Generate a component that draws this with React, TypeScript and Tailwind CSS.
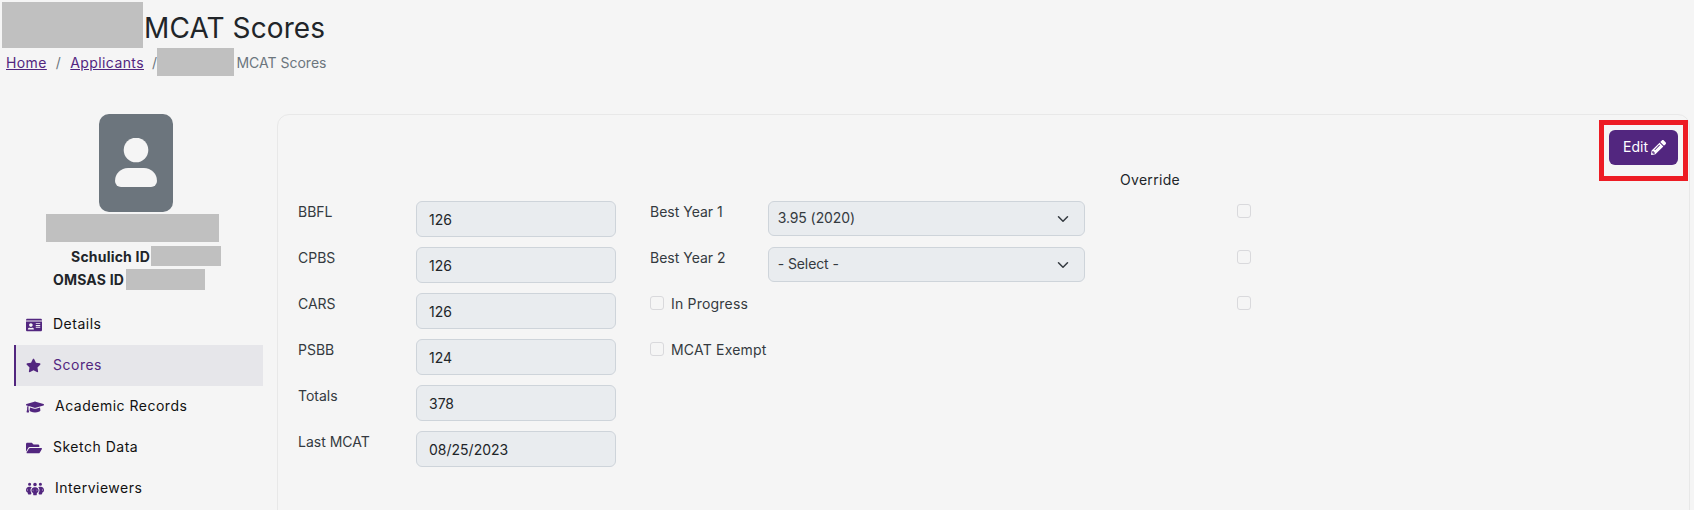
import React from 'react';
import { FaIdCard, FaStar, FaGraduationCap, FaFolderOpen, FaPencilAlt } from 'react-icons/fa';
import { FaPeopleGroup } from 'react-icons/fa6';

const FIELDS = [
  { label: 'BBFL', value: '126' },
  { label: 'CPBS', value: '126' },
  { label: 'CARS', value: '126' },
  { label: 'PSBB', value: '124' },
  { label: 'Totals', value: '378' },
  { label: 'Last MCAT', value: '08/25/2023' },
];

const NAV = [
  { label: 'Details', icon: <FaIdCard size={16} />, gap: 'w-[28px]' },
  { label: 'Scores', icon: <FaStar size={15} />, gap: 'w-[28px]', active: true },
  { label: 'Academic Records', icon: <FaGraduationCap size={18} />, gap: 'w-[30px]' },
  { label: 'Sketch Data', icon: <FaFolderOpen size={16} />, gap: 'w-[28px]' },
  { label: 'Interviewers', icon: <FaPeopleGroup size={18} />, gap: 'w-[30px]' },
];

const Redact = ({ className }: { className: string }) => <span className={`block shrink-0 bg-[#c0c0c0] ${className}`} />;

const Check = () => <span className="block w-[14px] h-[14px] rounded-[3px] border border-[#d9d9dc] bg-[#f5f5f5]" />;

const Chevron = () => (
  <svg width="16" height="12" viewBox="0 0 16 16" fill="none" stroke="#343a40" strokeWidth="2" strokeLinecap="round" strokeLinejoin="round">
    <path d="m2 5 6 6 6-6" />
  </svg>
);

const Select = ({ value }: { value: string }) => (
  <div className="w-[318px] h-[35px] flex items-center justify-between pl-[9px] pr-[13px] bg-[#e9ecef] border border-[#ced4da] rounded-[6px] text-[14px] tracking-[-0.1px]">
    <span className="pb-[2px]">{value}</span>
    <Chevron />
  </div>
);

export default function App() {
  return (
    <div className="h-[510px] overflow-hidden bg-[#f5f5f5] text-[#212529] font-['Inter','Liberation_Sans',sans-serif]">
      <header className="pt-[2px]">
        <div className="flex items-center h-[46px] pl-[2px] gap-[1px]">
          <Redact className="w-[141px] h-[46px]" />
          <h1 className="text-[28px] leading-[34px] tracking-[0.1px] pt-[6px] font-normal">MCAT Scores</h1>
        </div>
        <nav className="flex items-center h-[28px] pl-[6px] text-[14px] tracking-[0.4px] text-[#6c757d]">
          <a className="underline text-[#52267f]">Home</a>
          <span className="px-[9px]">/</span>
          <a className="underline text-[#52267f]">Applicants</a>
          <span className="pl-[8px]">/</span>
          <Redact className="w-[77px] h-[28px]" />
          <span className="pl-[2px] tracking-[0px]">MCAT Scores</span>
        </nav>
      </header>

      <main className="flex pt-[38px] pl-[14px]">
        <aside className="w-[249px] shrink-0 mr-[14px]">
          <div className="flex flex-col items-center">
            <div className="w-[74px] h-[98px] rounded-[10px] bg-[#6c757d] mr-[5px] flex items-center justify-center">
              <svg width="44" height="50" viewBox="0 0 44 50" fill="#f5f5f5">
                <circle cx="22" cy="12" r="12.300" />
                <path d="M14 30h16a13 13 0 0 1 13 13a6 6 0 0 1-6 6H7a6 6 0 0 1-6-6a13 13 0 0 1 13-13z" />
              </svg>
            </div>
            <Redact className="w-[173px] h-[28px] mt-[2px] mr-[12px]" />
            <div className="flex items-center h-[20px] mt-[4px] ml-[15px] text-[14px] tracking-[0.2px] font-bold">
              Schulich ID
              <Redact className="w-[70px] h-[20px] ml-[1px]" />
            </div>
            <div className="flex items-center h-[21px] mt-[3px] mr-[19px] text-[14px] tracking-[0.2px] font-bold">
              OMSAS ID
              <Redact className="w-[79px] h-[21px] ml-[2px]" />
            </div>
          </div>
          <ul className="mt-[14px] text-[14px] tracking-[0.5px] text-[#111]">
            {NAV.map((item) => (
              <li
                key={item.label}
                className={`flex items-center h-[41px] pl-[10px] border-l-2 ${
                  item.active ? 'bg-[#e6e6ea] border-[#52267f] text-[#52267f]' : 'border-transparent'
                }`}
              >
                <span className={`flex items-center mr-[-1px] text-[#52267f] ${item.gap}`}>{item.icon}</span>
                <span className="pb-[2px]">{item.label}</span>
              </li>
            ))}
          </ul>
        </aside>

        <section className="relative grow mr-[4px] h-[500px] rounded-tl-[12px] rounded-tr-[12px] border border-[#e8e8e8] pl-[20px] pr-[11px]">
          <div className="flex justify-end pt-[15px]">
            <div className="relative">
              <button className="flex items-center gap-[3px] h-[35px] pl-[14px] pr-[12px] rounded-[6px] bg-[#52267f] text-white text-[14px]">
                <span className="pb-[2px]">Edit</span> <FaPencilAlt size={15} />
              </button>
              <span className="absolute left-[-10px] right-[-10px] top-[-10px] bottom-[-16px] border-[5px] border-[#ed1c24]" />
            </div>
          </div>

          <div className="flex mt-[4px]">
            <div className="w-[318px] pt-[32px]">
              {FIELDS.map((f) => (
                <div key={f.label} className="flex h-[36px] mb-[10px] text-[14px]">
                  <span className="w-[118px] text-[#343a40]">{f.label}</span>
                  <div className="w-[200px] flex items-center pl-[12px] bg-[#e9ecef] border border-[#ced4da] rounded-[6px]">{f.value}</div>
                </div>
              ))}
            </div>
            <div className="w-[435px] ml-[34px] pt-[32px] text-[14px] text-[#343a40]">
              <div className="flex h-[36px] mb-[10px]">
                <span className="w-[118px]">Best Year 1</span>
                <Select value="3.95 (2020)" />
              </div>
              <div className="flex h-[36px] mb-[10px]">
                <span className="w-[118px]">Best Year 2</span>
                <Select value="- Select -" />
              </div>
              <div className="flex items-center gap-[7px] h-[36px] mb-[10px] pb-[16px] tracking-[0.2px]">
                <Check />
                In Progress
              </div>
              <div className="flex items-center gap-[7px] h-[36px] pb-[16px] tracking-[0.2px]">
                <Check />
                MCAT Exempt
              </div>
            </div>
            <div className="w-[150px] ml-[1px] text-[14px]">
              <div className="h-[23px] pl-[34px] tracking-[0.3px]">Override</div>
              <div className="flex flex-col gap-[32px] pl-[151px] pt-[12px]">
                <Check />
                <Check />
                <Check />
              </div>
            </div>
          </div>
        </section>
      </main>
    </div>
  );
}
